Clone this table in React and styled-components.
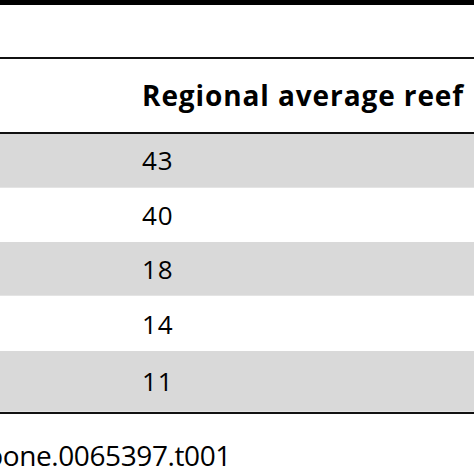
import styled, { createGlobalStyle } from "styled-components";

const GlobalStyle = createGlobalStyle`
  html, body {
    margin: 0;
    padding: 0;
    background: #fff;
  }
  body {
    width: 474px;
    height: 474px;
    overflow: hidden;
    font-family: "Open Sans", "Liberation Sans", sans-serif;
    color: #000;
  }
`;

const Page = styled.div`
  width: 474px;
  height: 474px;
  display: flex;
  flex-direction: column;
  overflow: hidden;
`;

const TopRule = styled.div`
  height: 5px;
  background: #000;
`;

const Rule = styled.div`
  height: 2px;
  background: #111;
`;

const Spacer = styled.div`
  height: 52px;
`;

const Row = styled.div`
  display: grid;
  grid-template-columns: 130px 1fr;
  align-items: center;
  height: ${(p) => p.$h}px;
  background: ${(p) => (p.$shade ? "#d9d9d9" : "#fff")};
  box-sizing: border-box;
  border-bottom: ${(p) => (p.$shade ? "1px solid #e4e4e4" : "none")};
`;

const Cell = styled.div`
  padding-left: 12px;
  font-size: 26px;
  letter-spacing: 1px;
  white-space: nowrap;
  line-height: 1;
`;

const HeadCell = styled(Cell)`
  font-size: 28px;
  font-weight: 700;
  letter-spacing: 0.9px;
`;

const Caption = styled.div`
  flex: 1;
  display: flex;
  align-items: center;
  padding-top: 22px;
  margin-left: -14px;
  font-size: 28px;
  letter-spacing: -0.4px;
  white-space: nowrap;
`;

const rows = [
  { value: "43", shade: true, h: 54 },
  { value: "40", shade: false, h: 55 },
  { value: "18", shade: true, h: 54 },
  { value: "14", shade: false, h: 55 },
  { value: "11", shade: true, h: 61 },
];

export default function App() {
  return (
    <Page>
      <GlobalStyle />
      <TopRule />
      <Spacer />
      <Rule />
      <Row $h={73}>
        <div />
        <HeadCell>Regional average reef</HeadCell>
      </Row>
      <Rule />
      {rows.map((r) => (
        <Row key={r.value} $shade={r.shade} $h={r.h}>
          <div />
          <Cell>{r.value}</Cell>
        </Row>
      ))}
      <Rule />
      <Caption>pone.0065397.t001</Caption>
    </Page>
  );
}
